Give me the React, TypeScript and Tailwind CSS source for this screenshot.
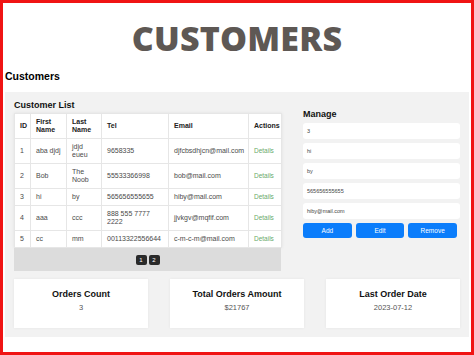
import React from "react";

type Customer = {
  id: number;
  first: string;
  last: string;
  tel: string;
  email: string;
};

const CUSTOMERS: Customer[] = [
  { id: 1, first: "aba djdj", last: "jdjd eueu", tel: "9658335", email: "djfcbsdhjcn@mail.com" },
  { id: 2, first: "Bob", last: "The Noob", tel: "55533366998", email: "bob@mail.com" },
  { id: 3, first: "hi", last: "by", tel: "565656555655", email: "hiby@mail.com" },
  { id: 4, first: "aaa", last: "ccc", tel: "888 555 7777 2222", email: "jjvkgv@mqfif.com" },
  { id: 5, first: "cc", last: "mm", tel: "00113322556644", email: "c-m-c-m@mail.com" },
];

const FIELDS = ["3", "hi", "by", "565656555655", "hiby@mail.com"];

const STATS = [
  { label: "Orders Count", value: "3" },
  { label: "Total Orders Amount", value: "$21767" },
  { label: "Last Order Date", value: "2023-07-12" },
];

const cell = "border border-[#e6e6e6] px-[5px] py-[4px] align-middle";

export default function App() {
  return (
    <div className="w-[474px] h-[355px] overflow-hidden border-[3px] border-[#f01414] bg-white font-['Liberation_Sans',Arial,sans-serif] px-[2px]">
      {/* ── Page title ── */}
      <h1 className="text-center font-['Open_Sans',sans-serif] font-extrabold text-[34px] leading-[40px] text-[#5e5854] pt-[15px] tracking-[0.2px]">
        CUSTOMERS
      </h1>
      <h2 className="mt-[11px] text-[10.5px] font-bold text-black leading-[14px]">Customers</h2>

      <div className="mt-[9px] bg-[#f2f2f2] px-[9px] pt-[7px] pb-[9px]">
        <div className="flex gap-[22px]">
          {/* ── Customer list ── */}
          <div className="w-[267px]">
            <h3 className="text-[9px] font-bold text-[#111] leading-[12px] mb-[2px]">Customer List</h3>
            <table className="w-full table-fixed border-collapse bg-white text-[7px] leading-[8px] text-[#4a4a4a] shadow-[0_0_3px_rgba(0,0,0,0.08)]">
              <colgroup>
                <col className="w-[16px]" />
                <col className="w-[36px]" />
                <col className="w-[35px]" />
                <col className="w-[67px]" />
                <col className="w-[80px]" />
                <col className="w-[33px]" />
              </colgroup>
              <thead>
                <tr className="text-left font-bold text-[#222]">
                  <th className={cell}>ID</th>
                  <th className={cell}>First Name</th>
                  <th className={cell}>Last Name</th>
                  <th className={cell}>Tel</th>
                  <th className={cell}>Email</th>
                  <th className={`${cell} px-[4px]`}>Actions</th>
                </tr>
              </thead>
              <tbody>
                {CUSTOMERS.map((c) => (
                  <tr key={c.id}>
                    <td className={cell}>{c.id}</td>
                    <td className={`${cell} whitespace-nowrap`}>{c.first}</td>
                    <td className={cell}>{c.last}</td>
                    <td className={cell}>{c.tel}</td>
                    <td className={`${cell} whitespace-nowrap`}>{c.email}</td>
                    <td className={`${cell} text-[#6aaa6a] text-[6.5px]`}>Details</td>
                  </tr>
                ))}
              </tbody>
            </table>
            <div className="h-[23px] bg-[#dcdcdc] flex items-center justify-center gap-[2px]">
              {["1", "2"].map((p) => (
                <span
                  key={p}
                  className="w-[11px] h-[10px] rounded-[2px] bg-[#2a2a2a] text-white text-[6px] leading-[10px] text-center"
                >
                  {p}
                </span>
              ))}
            </div>
          </div>

          {/* ── Manage form ── */}
          <div className="w-[157px] pt-[9px]">
            <h3 className="text-[9px] font-bold text-[#111] leading-[12px] mb-[3px]">Manage</h3>
            <div className="flex flex-col gap-[4px]">
              {FIELDS.map((f) => (
                <div
                  key={f}
                  className="h-[16px] rounded-[3px] bg-white px-[4px] text-[5.5px] leading-[16px] text-[#444]"
                >
                  {f}
                </div>
              ))}
            </div>
            <div className="mt-[4px] flex gap-[4px] pr-[3px]">
              {["Add", "Edit", "Remove"].map((b) => (
                <button
                  key={b}
                  className="flex-1 h-[15px] rounded-[3px] bg-[#0b7dfb] text-white text-[6.5px] leading-[15px]"
                >
                  {b}
                </button>
              ))}
            </div>
          </div>
        </div>

        {/* ── Stats ── */}
        <div className="mt-[8px] grid grid-cols-3 gap-[22px]">
          {STATS.map((s) => (
            <div
              key={s.label}
              className="h-[49px] bg-white shadow-[0_0_3px_rgba(0,0,0,0.06)] flex flex-col items-center pt-[9px]"
            >
              <p className="text-[9px] font-bold text-[#111] leading-[12px]">{s.label}</p>
              <p className="mt-[3px] text-[7.5px] text-[#555] leading-[10px]">{s.value}</p>
            </div>
          ))}
        </div>
      </div>
    </div>
  );
}
